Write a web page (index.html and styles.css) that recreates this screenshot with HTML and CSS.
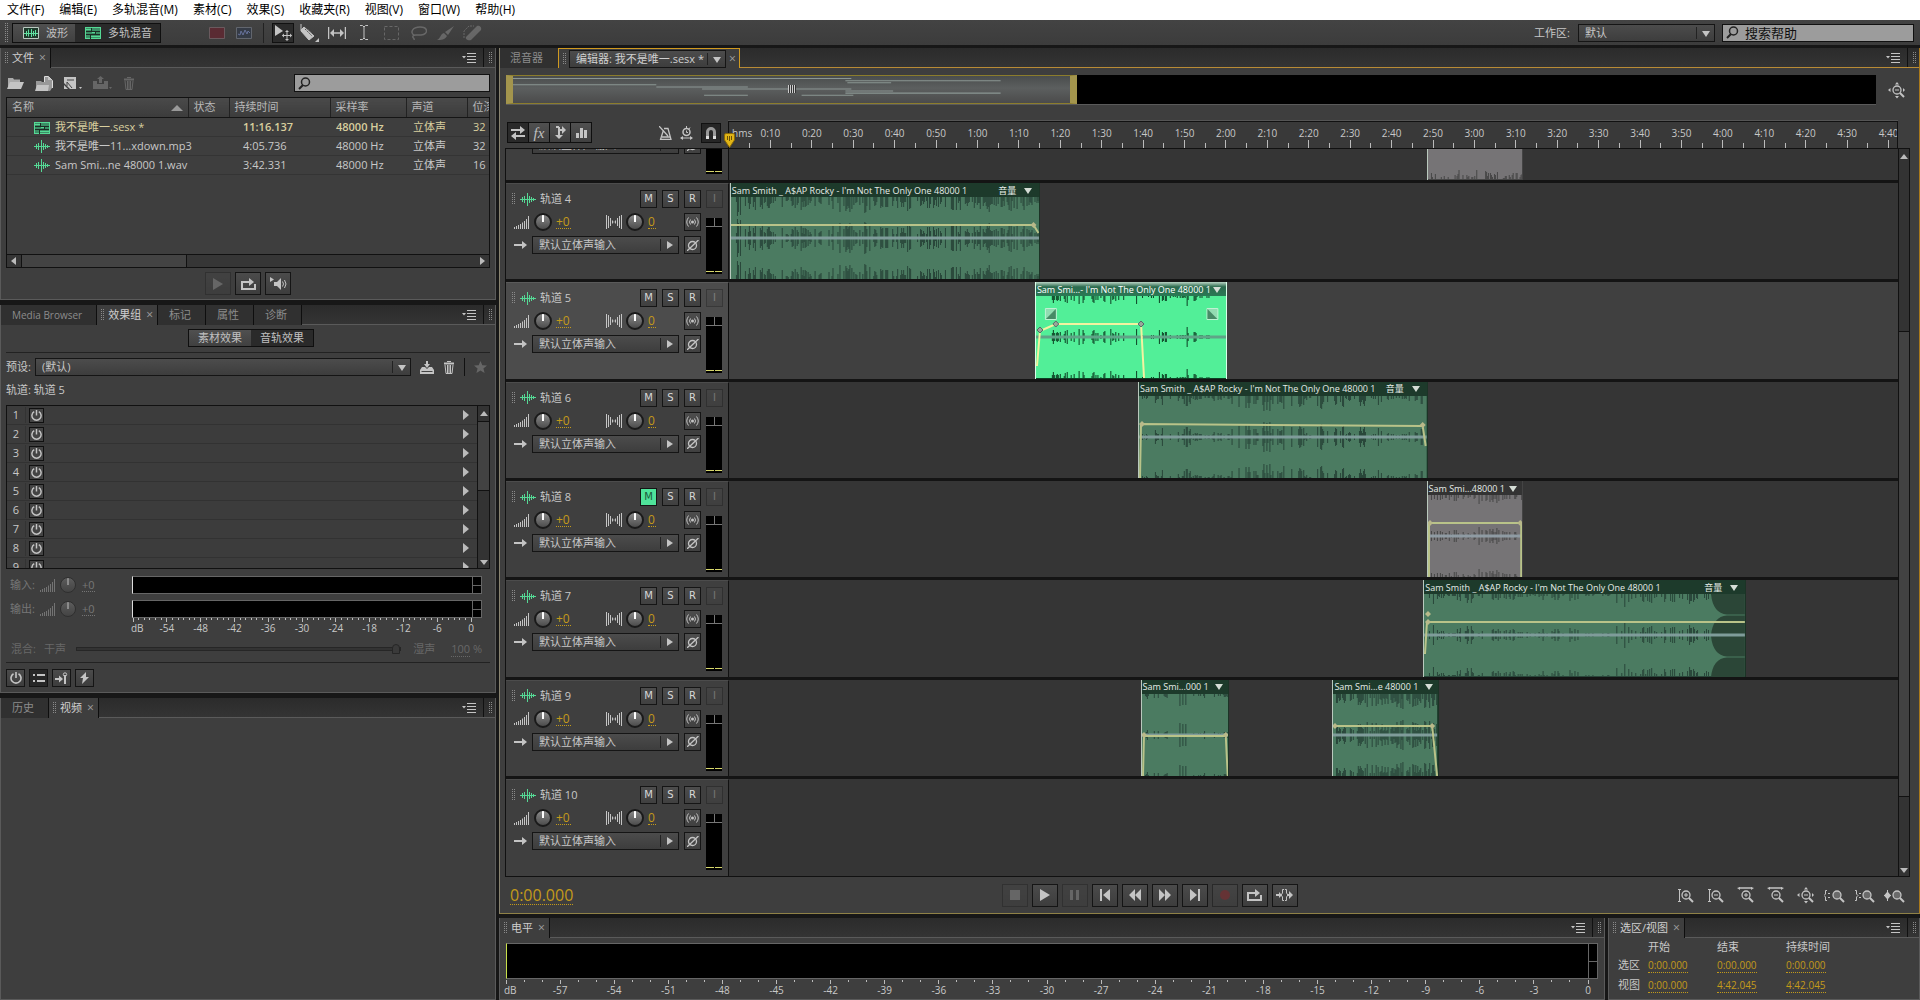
FILE: index.html
```html
<!DOCTYPE html>
<html lang="zh-CN">
<head>
<meta charset="utf-8">
<title>我不是唯一.sesx</title>
<meta name="viewport" content="width=device-width, initial-scale=1">
<link rel="stylesheet" href="styles.css">
</head>
<body>
<svg class="sprite" aria-hidden="true">
  <symbol id="i-menu" viewBox="0 0 14 10"><path d="M0 3h4L2 5.500z" fill="currentColor"/><path d="M5 .5h9M5 3.500h9M5 6.500h9M5 9.500h9" stroke="currentColor"/></symbol>
  <symbol id="i-wave" viewBox="0 0 16 13"><path d="M0 6.500h16M2.500 4v5M4.500 3v7M7.500 0v13M9.500 3v7M11.500 4v5M13.500 5v3" stroke="currentColor" fill="none"/></symbol>
  <symbol id="i-multi" viewBox="0 0 16 12"><path d="M.5.500h15v11H.500z" fill="#3c8f66" stroke="currentColor"/><path d="M1 4.500h14M1 7.500h14M6.500 1v3M10.500 4v4M5.500 8v4" stroke="#1c2d25" fill="none"/><path d="M1 2h5M7 5.500h3M6 9.500h9" stroke="currentColor"/></symbol>
  <symbol id="i-wavebox" viewBox="0 0 16 12"><path d="M.5.500h15v11H.500z" fill="#1f3a2c" stroke="#b9c9c0"/><path d="M1 6.500h14M3.500 4v5M5.500 2.500v7M8.500 2v8M10.500 4v5M12.500 3v6" stroke="#5fe0a0"/></symbol>
  <symbol id="i-specred" viewBox="0 0 16 12"><path d="M.5.500h15v11H.500z" fill="#5a2b33" stroke="#6a5a5e"/></symbol>
  <symbol id="i-specblue" viewBox="0 0 16 12"><path d="M.5.500h15v11H.500z" fill="#353b46" stroke="#62666e"/><path d="M2 7l2 1 1-4 2 4 2-5 2 4 1-3 2 2" stroke="#66719a" fill="none"/></symbol>
  <symbol id="i-move" viewBox="0 0 18 16"><path d="M1 0v11l8-5z" fill="currentColor"/><path d="M13 6v9M8.500 10.500h9" stroke="currentColor"/><path d="M13 5l-2 2h4zM13 16l-2-2h4zM8 10.500l2-2v4zM18 10.500l-2-2v4z" fill="currentColor"/></symbol>
  <symbol id="i-razor" viewBox="0 0 20 18"><path d="M1 0v6M1 6l3-3 10 9-5 4-8-9z" stroke="currentColor" fill="currentColor"/><path d="M5 5l7 7M8 5l4 4" stroke="#555" stroke-dasharray="2 1"/><path d="M19 14v4h-4z" fill="currentColor"/></symbol>
  <symbol id="i-slip" viewBox="0 0 18 12"><path d="M.5 0v12M17.500 0v12M3 6h12" stroke="currentColor" stroke-width="1.500"/><path d="M2 6l4-4v8zM16 6l-4-4v8z" fill="currentColor"/></symbol>
  <symbol id="i-ibeam" viewBox="0 0 8 15"><path d="M0 .5h2.500L4 2 5.500.500H8M4 2v11M0 14.500h2.500L4 13l1.500 1.500H8" stroke="currentColor" fill="none"/></symbol>
  <symbol id="i-marquee" viewBox="0 0 15 14"><path d="M.5.500h14v13H.500z" fill="none" stroke="currentColor" stroke-dasharray="3 2"/></symbol>
  <symbol id="i-lasso" viewBox="0 0 17 14"><path d="M4 9C0 7 2 1 10 1s9 7 1 8c-4 .5-7-1-8 1s2 2 1 4" fill="none" stroke="currentColor" stroke-width="1.500"/></symbol>
  <symbol id="i-brush" viewBox="0 0 17 14"><path d="M17 0L8 6l3 3zM7 7l3 3c-2 4-6 4-10 4 4-2 3-6 7-7z" fill="currentColor"/></symbol>
  <symbol id="i-heal" viewBox="0 0 19 16"><path d="M3 12L14 1c2-1 5 1 4 4L8 15c-3 1-6-1-5-3z" fill="currentColor"/><path d="M1 13V6l5-5h5" fill="none" stroke="currentColor" stroke-dasharray="2 1"/></symbol>
  <symbol id="i-search" viewBox="0 0 13 13"><circle cx="7.500" cy="5" r="4" fill="none" stroke="currentColor" stroke-width="1.500"/><path d="M5 8L1 12" stroke="currentColor" stroke-width="2"/></symbol>
  <symbol id="i-open" viewBox="0 0 17 12"><path d="M1 11V1h5l1 1.500h6V5H4z" fill="#aaa"/><path d="M0 12l3-7h14l-3 7z" fill="currentColor"/></symbol>
  <symbol id="i-import" viewBox="0 0 18 15"><path d="M1 14V5h5l1 1h2V1h5l3 3v8l-2 3z" fill="#999"/><path d="M9.500 6V.500h4l4 4V12" fill="none" stroke="#ddd"/><path d="M0 15l2-6h12l-1 6zM13 0l4 4h-4z" fill="currentColor"/></symbol>
  <symbol id="i-newfile" viewBox="0 0 18 13"><path d="M0 0h12v12H6L0 6z" fill="currentColor"/><path d="M3 3h7M3 9V5l5 6" stroke="#444" fill="none"/><path d="M0 8l4 4H0zM15 10h3l-1.500 2z" fill="currentColor"/></symbol>
  <symbol id="i-insert" viewBox="0 0 19 14"><path d="M0 5h4v3h7V5h4v8H0zM7.500 0L11 3H9v4H6V3H4zM16 11h3l-1.500 2z" fill="currentColor"/></symbol>
  <symbol id="i-trash" viewBox="0 0 12 13"><path d="M1 1.500h10v2H1zM4 0h4v1H4z" fill="currentColor"/><path d="M2 4l1 8.500h6L10 4M4.500 4v8M6 4v8M7.500 4v8" fill="none" stroke="currentColor"/></symbol>
  <symbol id="i-savep" viewBox="0 0 14 13"><path d="M0 9l2-3h3l2 2 2-2h3l2 3v4H0zM6 0h2v3h2L7 7 4 3h2z" fill="currentColor"/><path d="M1.500 10.500h11" stroke="#444"/></symbol>
  <symbol id="i-star" viewBox="0 0 13 12"><path d="M6.500 0l1.800 4.200 4.700.3-3.600 3 1.200 4.500-4.100-2.500L2.400 12l1.200-4.500L0 4.500l4.700-.3z" fill="currentColor"/></symbol>
  <symbol id="i-power" viewBox="0 0 12 12"><path d="M3.500 1.800a5 5 0 1 0 5 0M6 0v6" fill="none" stroke="currentColor" stroke-width="1.600"/></symbol>
  <symbol id="i-list" viewBox="0 0 12 10"><path d="M0 2h2M0 8h2M4 2h8M4 8h8" stroke="currentColor" stroke-width="2"/></symbol>
  <symbol id="i-prefx" viewBox="0 0 13 12"><path d="M0 7h5" stroke="currentColor" stroke-width="2"/><path d="M4 3.500L8 7l-4 3.500z" fill="currentColor"/><path d="M10 3v9" stroke="currentColor" stroke-width="2"/><circle cx="10" cy="2.500" r="1.700" fill="none" stroke="currentColor"/></symbol>
  <symbol id="i-bolt" viewBox="0 0 10 12"><path d="M6 0L0 6h3L2 12l7-7H6z" fill="currentColor"/></symbol>
  <symbol id="i-play" viewBox="0 0 10 12"><path d="M0 0l10 6-10 6z" fill="currentColor"/></symbol>
  <symbol id="i-stop" viewBox="0 0 10 10"><path d="M0 0h10v10H0z" fill="currentColor"/></symbol>
  <symbol id="i-pause" viewBox="0 0 9 10"><path d="M0 0h3v10H0zM6 0h3v10H6z" fill="currentColor"/></symbol>
  <symbol id="i-start" viewBox="0 0 10 12"><path d="M0 0h2v12H0zM10 0v12L3 6z" fill="currentColor"/></symbol>
  <symbol id="i-end" viewBox="0 0 10 12"><path d="M8 0h2v12H8zM0 0v12l7-6z" fill="currentColor"/></symbol>
  <symbol id="i-rew" viewBox="0 0 12 12"><path d="M6 0v12L0 6zM12 0v12L6 6z" fill="currentColor"/></symbol>
  <symbol id="i-fwd" viewBox="0 0 12 12"><path d="M0 0v12l6-6zM6 0v12l6-6z" fill="currentColor"/></symbol>
  <symbol id="i-rec" viewBox="0 0 10 10"><circle cx="5" cy="5" r="5" fill="#8c2a2e"/></symbol>
  <symbol id="i-loop" viewBox="0 0 15 12"><path d="M5 4H1v7h13V6M4 4h5" fill="none" stroke="currentColor" stroke-width="2"/><path d="M8 0l5 4-5 4z" fill="currentColor"/></symbol>
  <symbol id="i-skip" viewBox="0 0 18 12"><path d="M0 6h3M15 6h-4" stroke="currentColor" stroke-width="2"/><path d="M3 3l3 3-3 3zM13 2l4 4-4 4z" fill="currentColor"/><path d="M8 .5H6.500V4L5 6l1.500 2v3.500H8M9 .5h1.500V4L12 6l-1.500 2v3.500H9" stroke="currentColor" fill="none"/></symbol>
  <symbol id="i-speaker" viewBox="0 0 17 14"><path d="M0 0l4 2.500L0 5zM4 5h3l4-4v12L7 9H4z" fill="currentColor"/><path d="M12.500 4.500q2 2.500 0 5M14.500 3q3 4 0 8" fill="none" stroke="currentColor"/></symbol>
  <symbol id="i-swap" viewBox="0 0 14 14"><path d="M0 4h10M4 10h10" stroke="currentColor" stroke-width="2"/><path d="M9 0l5 4-5 4zM5 6l-5 4 5 4z" fill="currentColor"/></symbol>
  <symbol id="i-send" viewBox="0 0 11 13"><path d="M4 1v9M1 1h3M4 4h4" stroke="currentColor" stroke-width="2" fill="none"/><path d="M0 9h8l-4 4zM7 0l4 4-4 4z" fill="currentColor"/></symbol>
  <symbol id="i-bars" viewBox="0 0 11 10"><path d="M0 5h3v5H0zM4 0h3v10H4zM8 2h3v8H8z" fill="currentColor"/></symbol>
  <symbol id="i-metro" viewBox="0 0 13 14"><path d="M5 2.500h4l3 11H1.500L4.500 4M0 0l9 10M3 11h8" fill="none" stroke="currentColor" stroke-width="1.300"/></symbol>
  <symbol id="i-timer" viewBox="0 0 13 14"><circle cx="6.500" cy="6" r="3.500" fill="none" stroke="currentColor" stroke-width="1.500"/><path d="M6.500 0v2M6.500 4.500v2H8M10 1.500L9 3M1 12h11" stroke="currentColor" fill="none"/><path d="M0 12l3-2v4zM13 12l-3-2v4z" fill="currentColor"/></symbol>
  <symbol id="i-magnet" viewBox="0 0 10 12"><path d="M1.500 9V5a3.500 3.500 0 0 1 7 0v4" fill="none" stroke="#999" stroke-width="3"/><path d="M0 9h3v3H0zM7 9h3v3H7z" fill="#ddd"/></symbol>
  <symbol id="i-vol" viewBox="0 0 16 13"><path d="M.5 11v2M2.500 10v3M4.500 9v4M6.500 8v5M8.500 6.500V13M10.500 5v8M12.500 3v10M14.500 0v13" stroke="currentColor"/></symbol>
  <symbol id="i-pan" viewBox="0 0 16 14"><path d="M.5 0v14M2.500 1v12M4.500 3v8M6.500 5.500v3M8 6.500v1M9.500 5.500v3M11.500 3v8M13.500 1v12M15.500 0v14" stroke="currentColor"/></symbol>
  <symbol id="i-monitor" viewBox="0 0 13 10"><circle cx="6.500" cy="5" r="1.500" fill="currentColor"/><path d="M4.500 2.500q-2 2.500 0 5M8.500 2.500q2 2.500 0 5M2.500 .5q-3.500 4.500 0 9M10.500.500q3.500 4.500 0 9" fill="none" stroke="currentColor"/></symbol>
  <symbol id="i-phase" viewBox="0 0 12 11"><ellipse cx="5.500" cy="5.500" rx="4" ry="4" fill="none" stroke="currentColor" stroke-width="1.300"/><path d="M0 11L11.500 0" stroke="currentColor" stroke-width="1.300"/></symbol>
  <symbol id="i-arrow" viewBox="0 0 13 8"><path d="M0 4h9" stroke="currentColor" stroke-width="2"/><path d="M8 0l5 4-5 4z" fill="currentColor"/></symbol>
  <symbol id="i-zin" viewBox="0 0 17 17"><circle cx="9" cy="8" r="4" fill="none" stroke="currentColor" stroke-width="1.300"/><path d="M12 11l4 4" stroke="currentColor" stroke-width="2"/><path d="M7 8h4M9 6v4" stroke="currentColor"/></symbol>
  <symbol id="i-zout" viewBox="0 0 17 17"><circle cx="9" cy="8" r="4" fill="none" stroke="currentColor" stroke-width="1.300"/><path d="M12 11l4 4" stroke="currentColor" stroke-width="2"/><path d="M7 8h4" stroke="currentColor"/></symbol>
  <symbol id="i-zsel" viewBox="0 0 22 17"><circle cx="13" cy="8" r="4" fill="#6a6a6a" stroke="currentColor" stroke-width="1.300"/><path d="M16 11l4 4" stroke="currentColor" stroke-width="2"/></symbol>
  <symbol id="i-vmark" viewBox="0 0 17 17"><path d="M2.500 2v13M1 2.500h3M1 14.500h3" stroke="currentColor"/></symbol>
  <symbol id="i-hmark" viewBox="0 0 17 17"><path d="M2 1h13" stroke="currentColor" stroke-width="1.500"/><path d="M0 1l3-1v3zM17 1l-3-1v3z" fill="currentColor"/></symbol>
  <symbol id="i-allmark" viewBox="0 0 17 17"><path d="M0 8l2.500-2v4zM17 8l-2-2v4zM9 0l2 2.500H7zM9 16.500L7 14h4z" fill="currentColor"/></symbol>
  <symbol id="i-lmark" viewBox="0 0 22 17"><path d="M3 3.500H1.500V7L0 8.500 1.500 10v3.500H3" stroke="currentColor" fill="none"/><path d="M4 6h2v1H4zM4 10h2v1H4z" fill="currentColor"/></symbol>
  <symbol id="i-rmark" viewBox="0 0 22 17"><path d="M1 3.500h1.500V7L4 8.500 2.500 10v3.500H1" stroke="currentColor" fill="none"/><path d="M5 6h2v1H5zM5 10h2v1H5z" fill="currentColor"/></symbol>
  <symbol id="i-bmark" viewBox="0 0 22 17"><path d="M3.500 3v11M0 8.500h7" stroke="currentColor"/><path d="M0 8.500L3 5v7zM7 8.500L4 5v7z" fill="currentColor"/></symbol>
</svg>

<nav class="menubar" aria-label="主菜单">
  <button>文件(F)</button><button>编辑(E)</button><button>多轨混音(M)</button><button>素材(C)</button><button>效果(S)</button><button>收藏夹(R)</button><button>视图(V)</button><button>窗口(W)</button><button>帮助(H)</button>
</nav>

<header class="toolbar">
  <span class="grip"></span>
  <div class="segmented modes">
    <button><svg class="ic" width="16" height="12"><use href="#i-wavebox"/></svg>波形</button>
    <button class="on"><svg class="ic green" width="16" height="12"><use href="#i-multi"/></svg>多轨混音</button>
  </div>
  <div class="spectral">
    <button aria-label="频谱"><svg class="ic" width="16" height="12"><use href="#i-specred"/></svg></button>
    <button aria-label="音高"><svg class="ic" width="16" height="12"><use href="#i-specblue"/></svg></button>
  </div>
  <div class="tools">
    <button class="on" aria-label="移动"><svg class="ic" width="18" height="16"><use href="#i-move"/></svg></button>
    <button aria-label="切割"><svg class="ic" width="20" height="18"><use href="#i-razor"/></svg></button>
    <button aria-label="滑动"><svg class="ic" width="18" height="12"><use href="#i-slip"/></svg></button>
    <button aria-label="时间选区"><svg class="ic" width="8" height="15"><use href="#i-ibeam"/></svg></button>
    <button class="off" aria-label="框选"><svg class="ic" width="15" height="14"><use href="#i-marquee"/></svg></button>
    <button class="off" aria-label="套索"><svg class="ic" width="17" height="14"><use href="#i-lasso"/></svg></button>
    <button class="off" aria-label="画笔"><svg class="ic" width="17" height="14"><use href="#i-brush"/></svg></button>
    <button class="off" aria-label="污点修复"><svg class="ic" width="19" height="16"><use href="#i-heal"/></svg></button>
  </div>
  <label class="ws-label" for="ws">工作区:</label>
  <span class="select ws"><select id="ws"><option>默认</option></select></span>
  <label class="search help"><svg class="ic" width="13" height="13"><use href="#i-search"/></svg><input type="text" value="搜索帮助" aria-label="搜索帮助"></label>
</header>

<main class="workspace">
  <div class="side">
    <section class="panel">
      <div class="tabs">
        <button class="tab on"><span class="grip"></span>文件<span class="x">×</span></button>
        <span class="tabs-end"><svg class="ic" width="14" height="10"><use href="#i-menu"/></svg></span><span class="endgrip"><span class="grip"></span></span>
      </div>
      <div class="files">
        <div class="files-bar">
          <button aria-label="打开"><svg class="ic" width="17" height="12"><use href="#i-open"/></svg></button>
          <button aria-label="导入"><svg class="ic" width="18" height="15"><use href="#i-import"/></svg></button>
          <button aria-label="新建"><svg class="ic" width="18" height="13"><use href="#i-newfile"/></svg></button>
          <button class="off" aria-label="插入"><svg class="ic" width="19" height="14"><use href="#i-insert"/></svg></button>
          <button class="off" aria-label="删除"><svg class="ic" width="12" height="13"><use href="#i-trash"/></svg></button>
          <label class="search"><svg class="ic" width="13" height="13"><use href="#i-search"/></svg><input type="text" aria-label="搜索文件"></label>
        </div>
        <div class="filebox">
          <table class="filetable">
            <colgroup><col class="c-name"><col class="c-stat"><col class="c-dur"><col class="c-rate"><col class="c-chan"><col></colgroup>
            <thead><tr><th>名称<span class="sort"></span></th><th>状态</th><th>持续时间</th><th>采样率</th><th>声道</th><th>位深</th></tr></thead>
            <tbody>
              <tr class="cur"><td><svg class="ic green" width="16" height="12"><use href="#i-multi"/></svg>我不是唯一.sesx *</td><td></td><td>11:16.137</td><td>48000 Hz</td><td>立体声</td><td>32</td></tr>
              <tr><td><svg class="ic green" width="16" height="13"><use href="#i-wave"/></svg>我不是唯一11...xdown.mp3</td><td></td><td>4:05.736</td><td>48000 Hz</td><td>立体声</td><td>32</td></tr>
              <tr><td><svg class="ic green" width="16" height="13"><use href="#i-wave"/></svg>Sam Smi...ne 48000 1.wav</td><td></td><td>3:42.331</td><td>48000 Hz</td><td>立体声</td><td>16</td></tr>
            </tbody>
          </table>
          <div class="hscroll"><span class="tri left"></span><span class="thumb"></span><span class="tri right"></span></div>
        </div>
        <div class="preview">
          <button class="btn off" aria-label="播放"><svg class="ic" width="10" height="12"><use href="#i-play"/></svg></button>
          <button class="btn" aria-label="循环"><svg class="ic" width="15" height="12"><use href="#i-loop"/></svg></button>
          <button class="btn" aria-label="自动播放"><svg class="ic" width="17" height="14"><use href="#i-speaker"/></svg></button>
        </div>
      </div>
    </section>

    <section class="panel">
      <div class="tabs">
        <button class="tab latin">Media Browser</button>
        <button class="tab on"><span class="grip"></span>效果组<span class="x">×</span></button>
        <button class="tab">标记</button><button class="tab">属性</button><button class="tab">诊断</button>
        <span class="tabs-end"><svg class="ic" width="14" height="10"><use href="#i-menu"/></svg></span><span class="endgrip"><span class="grip"></span></span>
      </div>
      <div class="fx">
        <div class="fx-switch"><div class="segmented"><button>素材效果</button><button class="on">音轨效果</button></div></div>
        <div class="preset">
          <label for="preset">预设:</label>
          <span class="select"><select id="preset"><option>(默认)</option></select></span>
          <button aria-label="保存预设"><svg class="ic" width="14" height="13"><use href="#i-savep"/></svg></button>
          <button aria-label="删除预设"><svg class="ic" width="12" height="13"><use href="#i-trash"/></svg></button>
          <button class="fav" aria-label="收藏"><svg class="ic off" width="13" height="12"><use href="#i-star"/></svg></button>
        </div>
        <p class="fx-track">轨道: 轨道 5</p>
        <div class="fx-list"><ol id="slots"></ol><div class="vscroll"><span class="tri up"></span><span class="thumb"></span><span class="tri down"></span></div></div>
        <div class="io">
          <span class="io-label">输入:</span><svg class="ic" width="16" height="13"><use href="#i-vol"/></svg><span class="knob"></span><span class="val">+0</span><div class="meter"></div>
          <span class="io-label">输出:</span><svg class="ic" width="16" height="13"><use href="#i-vol"/></svg><span class="knob"></span><span class="val">+0</span><div class="meter"></div>
          <svg class="scale" id="fxscale"></svg>
        </div>
        <div class="mix"><label for="mix">混合:</label><span>干声</span><input type="range" id="mix" value="100" disabled><span>湿声</span><span class="pct"><span class="val">100</span> %</span></div>
        <div class="fx-foot">
          <button class="btn" aria-label="开关"><svg class="ic" width="12" height="12"><use href="#i-power"/></svg></button>
          <button class="btn on" aria-label="列表"><svg class="ic" width="12" height="10"><use href="#i-list"/></svg></button>
          <button class="btn" aria-label="推子前后"><svg class="ic" width="13" height="12"><use href="#i-prefx"/></svg></button>
          <button class="btn" aria-label="预渲染"><svg class="ic" width="10" height="12"><use href="#i-bolt"/></svg></button>
        </div>
      </div>
    </section>

    <section class="panel grow">
      <div class="tabs">
        <button class="tab">历史</button>
        <button class="tab on"><span class="grip"></span>视频<span class="x">×</span></button>
        <span class="tabs-end"><svg class="ic" width="14" height="10"><use href="#i-menu"/></svg></span><span class="endgrip"><span class="grip"></span></span>
      </div>
    </section>
  </div>

  <div class="main">
    <section class="panel grow editor">
      <div class="tabs">
        <button class="tab mixer">混音器</button>
        <div class="tab on doc"><span class="grip"></span><span class="select"><select aria-label="编辑器文件"><option>编辑器: 我不是唯一.sesx *</option></select></span><span class="x">×</span></div>
        <span class="tabs-end"><svg class="ic" width="14" height="10"><use href="#i-menu"/></svg></span><span class="endgrip"><span class="grip"></span></span>
      </div>
      <div class="nav-row">
        <div class="navigator"><div class="nav-view"><svg class="nav-lines" viewBox="0 0 560 26" preserveAspectRatio="none"><path d="M0 2.500h340M0 8.500h144M144 10.500h92M190 12.500h150M192 18.500h44M290 18.500h52M334 4.500h156M336 6.500h44M334 14.500h48M334 16.500h156" stroke="#8b9693"/></svg><span class="nav-grip"></span></div></div>
        <button aria-label="全部缩小"><svg class="ic" width="17" height="17"><use href="#i-zout"/><use href="#i-allmark"/></svg></button>
      </div>
      <div class="timeline">
        <div class="tl-tools">
          <div class="segmented icons">
            <button class="on" aria-label="输入输出"><svg class="ic" width="14" height="14"><use href="#i-swap"/></svg></button>
            <button aria-label="效果"><i>fx</i></button>
            <button aria-label="发送"><svg class="ic" width="11" height="13"><use href="#i-send"/></svg></button>
            <button aria-label="均衡"><svg class="ic" width="11" height="10"><use href="#i-bars"/></svg></button>
          </div>
          <button aria-label="节拍器" class="push"><svg class="ic" width="13" height="14"><use href="#i-metro"/></svg></button>
          <button aria-label="定时"><svg class="ic" width="13" height="14"><use href="#i-timer"/></svg></button>
          <button aria-label="吸附" class="snap"><svg class="ic" width="10" height="12"><use href="#i-magnet"/></svg></button>
        </div>
        <div class="ruler"><svg class="scale" id="ruler"></svg><svg class="playhead" width="11" height="15" viewBox="0 0 11 15"><path d="M.5 2Q.5.500 2 .5h7q1.500 0 1.500 1.500v5L5.500 14.500.5 7z" fill="#e0b416" stroke="#8a6a08"/><path d="M3.500 3v4M5.500 3v5M7.500 3v4" stroke="#6b5206"/></svg></div>
        <div class="corner"></div>
        <div class="tracks" id="tracks"></div>
        <div class="vscroll tl-scroll"><span class="tri up"></span><span class="thumb"></span><span class="tri down"></span></div>
      </div>
      <div class="transport">
        <span class="timecode val">0:00.000</span>
        <div class="tbtns">
          <button class="btn off" aria-label="停止"><svg class="ic" width="10" height="10"><use href="#i-stop"/></svg></button>
          <button class="btn" aria-label="播放"><svg class="ic" width="10" height="12"><use href="#i-play"/></svg></button>
          <button class="btn off" aria-label="暂停"><svg class="ic" width="9" height="10"><use href="#i-pause"/></svg></button>
          <button class="btn" aria-label="到开头"><svg class="ic" width="10" height="12"><use href="#i-start"/></svg></button>
          <button class="btn" aria-label="快退"><svg class="ic" width="12" height="12"><use href="#i-rew"/></svg></button>
          <button class="btn" aria-label="快进"><svg class="ic" width="12" height="12"><use href="#i-fwd"/></svg></button>
          <button class="btn" aria-label="到结尾"><svg class="ic" width="10" height="12"><use href="#i-end"/></svg></button>
          <button class="btn off rec" aria-label="录制"><svg class="ic" width="10" height="10"><use href="#i-rec"/></svg></button>
          <button class="btn" aria-label="循环"><svg class="ic" width="15" height="12"><use href="#i-loop"/></svg></button>
          <button class="btn" aria-label="跳过选区"><svg class="ic" width="18" height="12"><use href="#i-skip"/></svg></button>
        </div>
        <div class="zooms">
          <button aria-label="垂直放大"><svg class="ic" width="17" height="17"><use href="#i-zin"/><use href="#i-vmark"/></svg></button>
          <button aria-label="垂直缩小"><svg class="ic" width="17" height="17"><use href="#i-zout"/><use href="#i-vmark"/></svg></button>
          <button aria-label="水平放大"><svg class="ic" width="17" height="17"><use href="#i-zin"/><use href="#i-hmark"/></svg></button>
          <button aria-label="水平缩小"><svg class="ic" width="17" height="17"><use href="#i-zout"/><use href="#i-hmark"/></svg></button>
          <button aria-label="全部缩小"><svg class="ic" width="17" height="17"><use href="#i-zout"/><use href="#i-allmark"/></svg></button>
          <button aria-label="放大入点"><svg class="ic" width="22" height="17"><use href="#i-zsel"/><use href="#i-lmark"/></svg></button>
          <button aria-label="放大出点"><svg class="ic" width="22" height="17"><use href="#i-zsel"/><use href="#i-rmark"/></svg></button>
          <button aria-label="缩放选区"><svg class="ic" width="22" height="17"><use href="#i-zsel"/><use href="#i-bmark"/></svg></button>
        </div>
      </div>
    </section>

    <div class="bottom">
      <section class="panel grow">
        <div class="tabs">
          <button class="tab on"><span class="grip"></span>电平<span class="x">×</span></button>
          <span class="tabs-end"><svg class="ic" width="14" height="10"><use href="#i-menu"/></svg></span><span class="endgrip"><span class="grip"></span></span>
        </div>
        <div class="levels"><div class="meter big"></div><svg class="scale" id="lvscale"></svg></div>
      </section>
      <section class="panel selview">
        <div class="tabs">
          <button class="tab on"><span class="grip"></span>选区/视图<span class="x">×</span></button>
          <span class="tabs-end"><svg class="ic" width="14" height="10"><use href="#i-menu"/></svg></span><span class="endgrip"><span class="grip"></span></span>
        </div>
        <table class="seltable">
          <thead><tr><td></td><th>开始</th><th>结束</th><th>持续时间</th></tr></thead>
          <tbody>
            <tr><th>选区</th><td><span class="val">0:00.000</span></td><td><span class="val">0:00.000</span></td><td><span class="val">0:00.000</span></td></tr>
            <tr><th>视图</th><td><span class="val">0:00.000</span></td><td><span class="val">4:42.045</span></td><td><span class="val">4:42.045</span></td></tr>
          </tbody>
        </table>
      </section>
    </div>
  </div>
</main>
<script src="app.js"></script>
</body>
</html>
```
FILE: styles.css
```css
* { box-sizing: border-box; }
html, body { height: 100%; }
body {
  margin: 0;
  display: flex;
  flex-direction: column;
  background: #171717;
  color: #c8c8c8;
  font: 11px/16px "Open Sans", "Noto Sans CJK SC", sans-serif;
  overflow: hidden;
}
button, input, select { font: inherit; color: inherit; }
button { background: none; border: 0; padding: 0; display: flex; align-items: center; justify-content: center; white-space: nowrap; }
.sprite { display: none; }
.ic { display: block; flex: none; color: #c4c4c4; overflow: visible; }
.green { color: #55d995; shape-rendering: crispEdges; }
.off { opacity: .3; }
.latin { font-size: 10px; }

.menubar { flex: none; height: 20px; background: #fff; color: #000; display: flex; gap: 15px; padding: 0 7px; font-size: 12px; }

.toolbar {
  flex: none;
  height: 25px;
  display: flex;
  align-items: center;
  padding: 0 6px 0 4px;
  background: linear-gradient(#434343, #3c3c3c);
}
.grip { flex: none; width: 4px; height: 12px; background: conic-gradient(#8a8a8a 25%, transparent 0) 0 0 / 2px 2px; }
.toolbar > .grip { height: 20px; margin-right: 4px; }

.segmented { display: flex; border: 1px solid #0f0f0f; background: #0f0f0f; }
.segmented button { background: linear-gradient(#505050, #404040); color: #c0c0c0; height: 16px; padding: 0 9px; }
.segmented button.on { background: #2a2a2a; }
.modes button { height: 18px; gap: 7px; padding: 0 7px 0 10px; }
.modes .on { padding-right: 8px; }
.spectral { display: flex; gap: 11px; margin: 0 11px 0 48px; }
.tools { display: flex; align-items: center; gap: 5px; padding-left: 8px; height: 20px; border-left: 1px solid #222; }
.tools button { width: 22px; height: 20px; }
.tools button.on { border: 1px solid #111; background: #2b2b2b; }
.ws-label { margin-left: auto; padding-right: 8px; }

.select { position: relative; display: flex; border: 1px solid #151515; background: linear-gradient(#4c4c4c, #3d3d3d); height: 18px; }
.select select { appearance: none; flex: 1; min-width: 0; border: 0; outline: 0; background: none; padding: 0 18px 0 6px; height: 16px; line-height: 16px; }
.select::before { content: ""; position: absolute; right: 17px; top: 2px; bottom: 2px; border-left: 1px solid #222; pointer-events: none; }
.select::after { content: ""; position: absolute; right: 4px; top: 6px; border: 4px solid transparent; border-top: 6px solid #c4c4c4; border-bottom: 0; pointer-events: none; }
.ws { width: 137px; margin-right: 7px; }

.search { display: flex; align-items: center; background: #9c9c9c; border: 1px solid #111; height: 18px; padding: 0 3px; color: #111; }
.search .ic { color: #222; }
.search input { flex: 1; min-width: 0; border: 0; outline: 0; background: none; padding: 0 0 0 6px; height: 16px; font-size: 13px; }
.help { width: 192px; }

.workspace { flex: 1; min-height: 0; display: flex; gap: 3px; padding-top: 3px; }
.side { flex: none; width: 496px; display: flex; flex-direction: column; gap: 5px; }
.main { flex: 1; min-width: 0; display: flex; flex-direction: column; gap: 4px; }
.bottom { flex: none; display: flex; gap: 3px; height: 82px; }

.panel { background: #3e3e3e; border: 1px solid #5a5a5a; border-top: 0; display: flex; flex-direction: column; min-width: 0; }
.grow { flex: 1; min-height: 0; }
.tabs { flex: none; display: flex; height: 20px; background: linear-gradient(#2b2b2b, #343434); border-bottom: 1px solid #5a5a5a; }
.tab { height: 20px; padding: 0 14px 0 11px; color: #8c8c8c; background: #303030; border-right: 1px solid #0e0e0e; display: flex; align-items: center; }
.tab.on { background: #3e3e3e; color: #cfcfcf; padding: 0 4px 0 3px; }
.tab .grip { margin-right: 4px; }
.x { color: #a0a0a0; padding-left: 5px; font-size: 12px; }
.tabs-end { margin-left: auto; display: flex; align-items: center; padding-right: 7px; }
.endgrip { display: flex; align-items: center; padding: 0 3px 0 4px; border-left: 1px solid #111; }

/* Files */
.files { padding: 6px 5px 4px; display: flex; flex-direction: column; }
.files-bar { display: flex; align-items: center; gap: 11px; height: 18px; padding-left: 1px; }
.files-bar .search { margin-left: auto; width: 196px; }
.filebox { margin-top: 5px; height: 171px; border: 1px solid #111; overflow: hidden; display: flex; flex-direction: column; }
.filetable { table-layout: fixed; width: 100%; border-collapse: collapse; white-space: nowrap; }
.c-name { width: 181px; } .c-stat { width: 41px; } .c-dur { width: 101px; } .c-rate { width: 76px; } .c-chan { width: 61px; }
.filetable th { height: 19px; padding: 0 5px; text-align: left; font-weight: 400; background: linear-gradient(#4a4a4a, #3c3c3c); border-bottom: 1px solid #151515; border-right: 1px solid #222; overflow: hidden; color: #b8b8b8; }
.filetable td { height: 19px; padding: 0 0 0 6px; border-bottom: 1px solid #343434; }
.filetable th:last-child { border-right: 0; }
.filetable td:first-child { padding-left: 27px; }
.filetable td:nth-child(3) { padding-left: 14px; }
.filetable td:nth-child(5) { padding-left: 7px; }
.filetable td .ic { display: inline-block; vertical-align: middle; margin-right: 5px; }
.filetable .cur { color: #d9cf9e; }
.cur td:nth-child(3), .cur td:nth-child(4) { font-weight: 600; }
.sort { float: right; margin-top: 6px; border: 6px solid transparent; border-bottom: 6px solid #999; border-top: 0; }
.hscroll { margin-top: auto; height: 13px; border-top: 1px solid #111; background: #363636; display: flex; align-items: center; padding: 0 4px; gap: 5px; }
.hscroll .thumb { width: 166px; height: 12px; background: #434343; border: solid #111; border-width: 0 1px; margin-right: auto; }
.tri { flex: none; border: 4px solid transparent; }
.tri.left { border-right: 5px solid #bbb; border-left: 0; }
.tri.right { border-left: 5px solid #bbb; border-right: 0; }
.tri.up { border-bottom: 5px solid #bbb; border-top: 0; }
.tri.down { border-top: 5px solid #bbb; border-bottom: 0; }
.btn { width: 26px; height: 23px; border: 1px solid #151515; background: linear-gradient(#4b4b4b, #3d3d3d); }
.preview { display: flex; justify-content: center; gap: 4px; padding-top: 4px; }

/* Effects rack */
.fx { padding: 4px 5px 5px; display: flex; flex-direction: column; }
.fx-switch { display: flex; justify-content: center; padding-bottom: 5px; border-bottom: 1px solid #222; }
.fx-switch .segmented { margin-left: 6px; }
.preset { display: flex; align-items: center; padding-top: 5px; gap: 9px; }
.preset label { margin-right: -5px; }
.preset .select { flex: 1; }
.fav { border-left: 1px solid #111; height: 18px; padding: 0 3px 0 9px; }
.fx-track { margin: 0; padding: 5px 0 7px; line-height: 17px; }
.fx-list { display: flex; height: 164px; border: 1px solid #111; background: #3c3c3c; overflow: hidden; }
.fx-list ol { flex: 1; list-style: none; margin: 0; padding: 0; }
.fx-list li { height: 19px; display: flex; align-items: center; border-bottom: 1px solid #323232; }
.fx-list .num { width: 19px; text-align: center; border-right: 1px solid #333; margin-right: 3px; }
.pow { width: 15px; height: 15px; border: 1px solid #111; background: #444; }
.fx-list .tri.right { border-width: 5px; border-left-width: 6px; border-right: 0; margin: 0 8px 0 auto; }
.vscroll { flex: none; width: 12px; border-left: 1px solid #111; background: #333; display: flex; flex-direction: column; align-items: center; padding: 5px 0 3px; }
.vscroll .thumb { width: 100%; height: 70px; margin: 5px 0 auto; background: #424242; border: solid #111; border-width: 1px 0; }
.io { display: grid; grid-template-columns: 30px 20px 22px 50px minmax(0, 1fr); row-gap: 6px; padding: 7px 8px 0 4px; align-items: center; }
.io > :not(.meter):not(.scale) { opacity: .4; }
.io .scale { grid-column: 5; margin: -7px 0 0 1px; width: calc(100% - 12px); height: 15px; }
.knob { width: 18px; height: 18px; border-radius: 50%; border: 2px solid #1a1a1a; background: linear-gradient(90deg, transparent 6px, #fff 6px, #fff 8px, transparent 8px) 0 0 / 14px 7px no-repeat, linear-gradient(#8a8a8a, #4c4c4c); flex: none; }
.io .knob { width: 16px; height: 16px; border-width: 1px; }
.val { border-bottom: 1px dotted currentColor; line-height: 13px; justify-self: start; color: #c39a1a; }
.io .val, .mix .val { color: inherit; }
.meter { height: 18px; border: 1px solid #666; border-left-color: #ddd; background: linear-gradient(#666, #666) right 8px top 0 / 1px 100% no-repeat, linear-gradient(#666, #666) right 50% / 8px 1px no-repeat, #000; }
.scale { display: block; overflow: visible; fill: #c8c8c8; font-size: 10px; width: 100%; }
.scale line { stroke: #bbb; shape-rendering: crispEdges; }
.mix { display: flex; align-items: center; gap: 8px; padding: 6px 8px 5px 5px; margin-top: 3px; color: #686868; border-bottom: 1px solid #222; }
.mix input { appearance: none; flex: 1; min-width: 0; height: 4px; margin: 0 4px 0 2px; background: #333; border: 1px solid #262626; }
.mix input::-webkit-slider-thumb { appearance: none; width: 8px; height: 10px; background: #3a3a3a; border: 1px solid #262626; border-radius: 4px 4px 0 0; }
.pct { margin-left: 8px; }
.fx-foot { display: flex; gap: 4px; padding-top: 6px; }
.fx-foot .btn { width: 19px; height: 18px; }
.fx-foot .btn.on { background: #272727; }

/* Editor */
.editor { border-color: #c28a1c #a9791c #8f8147 #88836f; }
.editor .tabs { border-bottom-color: #b98b35; }
.mixer { padding: 0 15px 0 10px; border-right: 0; }
.doc.on { height: 20px; border: 1px solid #d09a20; border-bottom: 0; padding: 0 3px; }
.doc .grip { margin-right: 3px; }
.doc .select { width: 157px; }
.doc .x { padding-left: 3px; }
.nav-row { flex: none; display: flex; align-items: center; gap: 12px; padding: 7px 14px 0 6px; }
.navigator { flex: 1; height: 30px; background: #000; display: flex; border-bottom: 1px solid #5a5a5a; }
.nav-view { position: relative; width: 41.7%; border: 1px solid #8c7d2c; border-left: 7px solid #a3954d; border-right: 7px solid #a3954d; background: linear-gradient(#4a4d4d, #5c5f5f 45%, #4b4b4b); }
.nav-lines { display: block; width: 100%; height: 100%; }
.nav-grip { position: absolute; left: calc(50% - 4px); top: 9px; width: 8px; height: 8px; background: repeating-linear-gradient(90deg, #ccc 0 1px, #333 1px 2px); }
.timeline { flex: 1; min-height: 0; display: grid; grid-template-columns: 223px minmax(0, 1fr) 13px; grid-template-rows: 27px minmax(0, 1fr); margin: 16px 8px 0 5px; }
.tl-tools { display: flex; align-items: center; padding: 0 7px 4px 2px; }
.segmented.icons { gap: 1px; }
.segmented.icons button { width: 20px; height: 19px; padding: 0; }
.icons i { font: italic 15px/16px "Liberation Serif", serif; }
.push { margin-left: auto; }
.tl-tools > button + button { margin-left: 8px; }
.snap { width: 20px; height: 20px; background: #262626; border: 1px solid #111; }
.ruler { position: relative; border: solid #111; border-width: 1px 1px 0 1px; background: #393939; overflow: visible; box-shadow: 0 -1px #555; }
.ruler .scale { height: 26px; overflow: hidden; }
.playhead { position: absolute; left: -5px; bottom: 0; }
.tracks { grid-column: 1 / 3; display: grid; grid-template-rows: 34px repeat(6, minmax(0, 1fr)) 97px; border: 1px solid #111; border-right: 0; min-height: 0; }
.track { display: grid; grid-template-columns: 223px minmax(0, 1fr); grid-template-rows: 97px; border-bottom: 3px solid #141414; min-height: 0; overflow: hidden; }
.track:first-child { align-content: end; }
.track:last-child { border-bottom: 0; }
.head { display: flex; gap: 5px; padding: 6px 5px 4px 5px; background: #3f3f3f; border-top: 1px solid #4c4c4c; border-right: 1px solid #111; }
.track.sel .head { background: #4c4c4c; border-top-color: #5a5a5a; }
.controls { flex: 1; display: flex; flex-direction: column; gap: 5px; }
.controls > div { display: flex; align-items: center; height: 18px; }
.controls .grip { margin-right: 5px; }
.name { margin-left: 4px; margin-right: auto; }
.sq { width: 17px; height: 18px; border: 1px solid #151515; background: linear-gradient(#4d4d4d, #404040); margin-left: 5px; flex: none; font: 10px/16px "DejaVu Sans", sans-serif; color: #d8d8d8; }
.sq.lit { background: #4fe39a; color: #1c5a3a; }
.vol { padding-left: 3px; }
.vol .knob { margin: 0 4px; }
.vol .val { width: 15px; font-size: 12px; }
.vol .pan { margin-left: 35px; }
.vol .pan ~ .val { width: 8px; margin-right: auto; }
.route { padding-left: 3px; }
.route .select { flex: 1; margin-left: 5px; }
.route .select::after { border: 4px solid transparent; border-left: 6px solid #c4c4c4; border-right: 0; top: 4px; right: 5px; }
.ends { width: 17px; display: flex; flex-direction: column; gap: 10px; }
.ends .sq { margin: 0; opacity: .35; }
.vu { height: 56px; width: 16px; background: linear-gradient(#777, #777) 0 8px / 100% 1px no-repeat, linear-gradient(#777, #777) 50% 0 / 1px 8px no-repeat, linear-gradient(#000, #000) 50% 0 / 1px 100% no-repeat, linear-gradient(transparent 53px, #d6d66a 53px, #d6d66a 54px, transparent 54px), #000; }
.lane { position: relative; background: #353535; }
.track.sel .lane { background: #404040; }

.clip { position: absolute; top: 0; bottom: 0; display: flex; flex-direction: column; background: #1d3a2b; border-left: 1px solid #b9c9bd; border-right: 1px solid #1c3326; overflow: hidden; }
.clip .bar { flex: none; height: 14px; line-height: 14px; font-size: 9px; padding: 1px 7px 0 1px; display: flex; align-items: center; white-space: nowrap; color: #e6ece7; }
.clip .bar .par { margin-left: auto; }
.clip .bar::after { content: ""; margin-left: 8px; border: 4px solid transparent; border-top: 6px solid #d5ddd6; border-bottom: 0; }
.clip.end .bar { padding-right: 5px; }
.clip.end .bar::after { margin-left: auto; }
.clip svg { display: block; width: 100%; flex: 1; min-height: 0; overflow: hidden; }
.clip .wave { fill: #4b7b61; }
.clip .dark { stroke: #29463a; fill: none; shape-rendering: crispEdges; }
.clip .gap { fill: #2b4637; }
.clip .panl { stroke: #7f9c9a; stroke-width: 3; }
.clip .env { stroke: #b9c389; stroke-width: 2; fill: none; }
.clip .pt { fill: #b9b98a; }
.clip.grey { background: #333; border-right-color: #444; }
.clip.grey .wave { fill: #767476; }
.clip.grey .dark { stroke: #474747; }
.clip.grey .panl { stroke: #8f9ba3; }
.clip.bright { background: #52ef98; border-left-color: #d9ffe9; border-right-color: #d9ffe9; }
.clip.bright .bar { background: linear-gradient(#b9d3c4, #2c6b4e 35%, #2a7a55); color: #fff; }
.clip.bright .wave { fill: #52ef98; }
.clip.bright .dark { stroke: #0c3d22; }
.clip.bright .env { stroke: #f3f2a0; }
.clip.bright .panl { stroke: #5fa487; }
.clip.bright .pt { fill: #9aa79a; stroke: #566; }
.fade { fill: #93dcb2; stroke: #bff2d4; }
.fade + path { fill: #478a66; }

.tl-scroll { border: 1px solid #111; }
.tl-scroll .thumb { flex: none; height: 466px; margin-top: 172px; }
.transport { flex: none; display: grid; grid-template-columns: 35% auto 1fr; column-gap: 4px; align-items: center; height: 36px; padding: 0 15px 0 10px; }
.timecode { font-size: 16px; line-height: 18px; justify-self: start; }
.tbtns { display: flex; gap: 4px; }
.rec.off { opacity: .5; }
.zooms { display: flex; gap: 12px; justify-content: flex-end; }
.zooms button { width: 18px; }

/* Levels and selection */
.levels { padding: 5px 6px 0 6px; }
.levels .scale { width: calc(100% - 10px); height: 18px; }
.meter.big { height: 36px; border-left: 1px solid #c9e04a; }
.selview { width: 312px; flex: none; }
.seltable { border-collapse: collapse; margin: 0 0 0 9px; width: 237px; table-layout: fixed; }
.seltable th, .seltable td { padding: 0; text-align: left; font-weight: 400; height: 20px; width: 69px; }
.seltable thead th, .seltable thead td { height: 17px; }
.seltable tr > :first-child { width: 30px; }
.seltable td { font-size: 10px; }
```
FILE: app.js
```js
const TOTAL = 282.045;
const use = (id, w, h, cls = '') => `<svg class="ic ${cls}" width="${w}" height="${h}"><use href="#${id}"/></svg>`;

/* Effect slots */
document.getElementById('slots').innerHTML = Array.from({ length: 9 }, (_, i) =>
  `<li><span class="num">${i + 1}</span><button class="pow" aria-label="效果 ${i + 1}">${use('i-power', 11, 11)}</button><span class="tri right"></span></li>`).join('');

/* Level scales: one tick per dB, labels at each step */
function dbScale(id, step) {
  let s = '';
  for (let db = -60; db <= 0; db++) {
    const x = ((db + 60) / 60 * 100).toFixed(2) + '%';
    const major = db % step === 0;
    s += `<line x1="${x}" x2="${x}" y1="1" y2="${major ? 5 : 3}"/>`;
    if (major) s += db === -60 ? '<text x="-2" y="15">dB</text>' : `<text x="${x}" y="15" text-anchor="middle">${db}</text>`;
  }
  document.getElementById(id).innerHTML = s;
}
dbScale('fxscale', 6);
dbScale('lvscale', 3);

/* Time ruler */
let r = '<text x="3" y="15">hms</text>';
for (let t = 5; t < TOTAL; t += 5) {
  const x = (t / TOTAL * 100).toFixed(3) + '%';
  r += `<line x1="${x}" x2="${x}" y1="${t % 10 ? 21 : 18}" y2="26"/>`;
  if (t % 10 === 0) r += `<text x="${x}" y="15" text-anchor="middle">${Math.floor(t / 60)}:${String(t % 60).padStart(2, '0')}</text>`;
}
document.getElementById('ruler').innerHTML = r;

/* Clips: start/end in seconds, w = drawing width, loud = spike depth profile */
const LONG = "Sam Smith _ A$AP Rocky - I'm Not The Only One 48000 1";
const tracks = [
  { name: '轨道 3', clips: [{ s: 168.3, e: 191.6, w: 96, t: 'Sam Smi...48000 1', kind: 'grey', loud: [6, 4, 9, 4, 10, 7, 4, 6], fill: .4, env: '' }] },
  { name: '轨道 4', clips: [{ s: .2, e: 75.1, w: 310, t: LONG, par: 1, loud: [19, 12, 13, 11, 13, 9, 12, 15, 18, 11, 10, 15, 12, 10, 14, 10, 16, 9, 14, 10], fill: .6, env: '0,28 304,28 309,36', pts: [[304, 28]] }] },
  { name: '轨道 5', sel: 1, clips: [{ s: 73.8, e: 120.2, w: 192, t: "Sam Smi...- I'm Not The Only One 48000 1", kind: 'bright', loud: [8, 7, 5, 9, 7, 6, 5, 10, 8, 7, 1, 1, 7, 1, 1, 9, 1, 2, 0], fill: .35, env: '1,70 4,35 20,28 106,28 109,82', pts: [[4, 34], [20, 28], [106, 28]], fades: 1 }] },
  { name: '轨道 6', clips: [{ s: 98.7, e: 168.6, w: 289, t: LONG, par: 1, loud: [3, 7, 10, 4, 10, 3, 2, 4, 3, 13, 12, 9, 14, 8, 12, 11, 4, 12, 8, 14, 4, 9, 3, 9, 3, 3, 4, 8], fill: .45, env: '1,82 2,28 285,30 288,50', pts: [[3, 28], [285, 29]] }] },
  { name: '轨道 8', mute: 1, clips: [{ s: 168.3, e: 191.5, w: 95, t: 'Sam Smi...48000 1', kind: 'grey', loud: [6, 4, 9, 4, 10, 7, 4, 6], fill: .4, env: '1,82 1,28 94,28 94,82', pts: [[2, 28], [93, 28]] }] },
  { name: '轨道 7', clips: [{ s: 167.5, e: 245.4, w: 322, t: LONG, par: 1, loud: [9, 4, 2, 7, 9, 3, 10, 9, 6, 2, 1, 6, 7, 1, 9, 1, 1, 1, 10, 12, 4, 10, 3, 8, 8, 9, 7, 5, 0, 0, 0], fill: .4, tail: 288, env: '1,60 3,28 322,28', pts: [[4, 20], [4, 28]] }] },
  { name: '轨道 9', clips: [
    { s: 99.3, e: 120.7, w: 88, t: 'Sam Smi...000 1', loud: [5, 4, 0, 12, 2, 3, 2], fill: .4, env: '1,82 2,42 85,42 87,82', pts: [[2, 41], [85, 41]] },
    { s: 145.6, e: 171.2, w: 105, t: 'Sam Smi...e 48000 1', loud: [9, 13, 12, 11, 13, 14, 13, 15], fill: .65, env: '1,32 100,32 105,82', pts: [[2, 32], [100, 32]] }] },
  { name: '轨道 10', clips: [] }
];

let seed = 7;
const rnd = () => (seed = (seed * 16807) % 2147483647) / 2147483647;

function spikes(c) {
  let d = '';
  const end = c.tail || c.w;
  for (let x = 3; x < end; x++) {
    if (rnd() > c.fill) continue;
    const depth = c.loud[Math.floor(x / c.w * c.loud.length)];
    const h = Math.round(1 + depth * (.2 + .8 * rnd()));
    if (depth) d += `M${x}.5 0v${h}M${x}.5 ${41 - h}v${2 * h}M${x}.5 83v${-h}`;
  }
  return d;
}

function tail(c) {
  const a = c.tail, w = c.w;
  const lens = (y0, y1) => {
    const m = (y0 + y1) / 2;
    return `M${a} ${y0}Q${a + 2} ${m - 1} ${a + 16} ${m}H${w}V${y0}zM${a} ${y1}Q${a + 2} ${m + 2} ${a + 16} ${m + 1}H${w}V${y1}z`;
  };
  return `<path class="gap" d="${lens(0, 41)}${lens(42, 83)}"/>`;
}

function clip(c) {
  const pts = (c.pts || []).map(([x, y]) => `<path class="pt" d="M${x - 3} ${y}l3-3 3 3-3 3z"/>`).join('');
  const fades = c.fades ? '<path class="fade" d="M9.500 12.500h11v11h-11z"/><path d="M10 23l10-10v10z"/><path class="fade" d="M172.500 12.500h11v11h-11z"/><path d="M173 13l10 10h-10z"/>' : '';
  return `<div class="clip ${c.kind || ''} ${c.par ? '' : 'end'}" style="left:${(c.s / TOTAL * 100).toFixed(2)}%;width:${((c.e - c.s) / TOTAL * 100).toFixed(2)}%">
    <div class="bar"><span>${c.t}</span>${c.par ? '<span class="par">音量</span>' : ''}</div>
    <svg viewBox="0 0 ${c.w} 83" preserveAspectRatio="none"><rect class="wave" width="${c.w}" height="83"/><path class="dark" d="${spikes(c)}M0 82.500h${c.w}"/>${c.tail ? tail(c) : ''}
    <line class="panl" x1="0" x2="${c.w}" y1="41" y2="41"/>${c.env ? `<polyline class="env" points="${c.env}"/>` : ''}${fades}${pts}</svg></div>`;
}

document.getElementById('tracks').innerHTML = tracks.map(t => `
<div class="track ${t.sel ? 'sel' : ''}">
  <div class="head">
    <div class="controls">
      <div><span class="grip"></span>${use('i-wave', 16, 13, 'green')}<span class="name">${t.name}</span><button class="sq ${t.mute ? 'lit' : ''}">M</button><button class="sq">S</button><button class="sq">R</button></div>
      <div class="vol">${use('i-vol', 16, 13)}<span class="knob"></span><span class="val">+0</span>${use('i-pan', 16, 14, 'pan')}<span class="knob"></span><span class="val">0</span><button class="sq" aria-label="监听">${use('i-monitor', 13, 10)}</button></div>
      <div class="route">${use('i-arrow', 13, 8)}<span class="select"><select aria-label="${t.name} 输入"><option>默认立体声输入</option></select></span><button class="sq" aria-label="反相">${use('i-phase', 12, 11)}</button></div>
    </div>
    <div class="ends"><button class="sq">I</button><div class="vu"></div></div>
  </div>
  <div class="lane">${t.clips.map(clip).join('')}</div>
</div>`).join('');
```
